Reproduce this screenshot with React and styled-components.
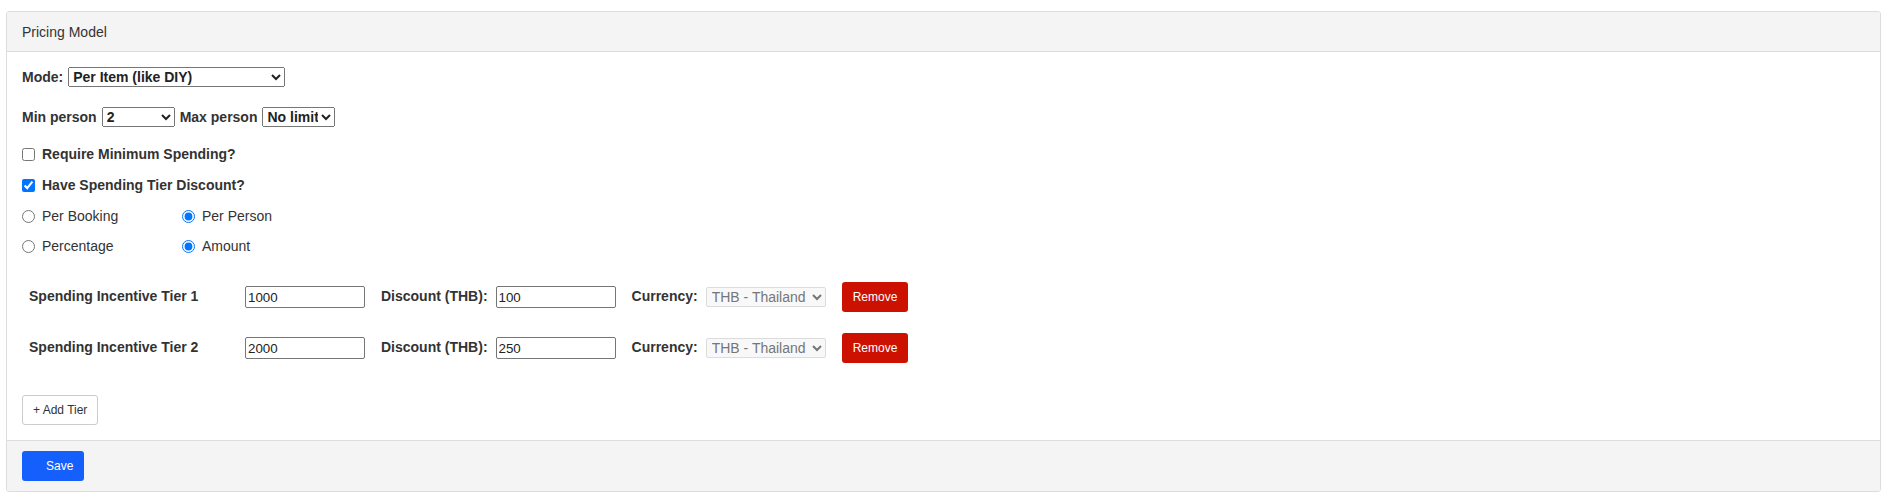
import React from 'react';
import styled, { createGlobalStyle } from 'styled-components';

const Global = createGlobalStyle`
  html, body { margin: 0; padding: 0; background: #fff; }
  body {
    font-family: "Liberation Sans", Arial, Helvetica, sans-serif;
    font-size: 14px;
    color: #333;
  }
  * { box-sizing: border-box; }
`;

const Page = styled.div`
  padding: 11px 8px 8px 6px;
`;

const Card = styled.section`
  border: 1px solid #ddd;
  border-radius: 3px;
  background: #fff;
  overflow: hidden;
`;

const CardHeader = styled.header`
  height: 40px;
  line-height: 40px;
  padding: 0 15px;
  background: #f4f4f4;
  border-bottom: 1px solid #ddd;
  font-size: 14px;
  color: #333;
`;

const CardBody = styled.div`
  padding: 15px;
  display: flex;
  flex-direction: column;
  align-items: flex-start;
`;

const CardFooter = styled.footer`
  padding: 10px 15px;
  background: #f4f4f4;
  border-top: 1px solid #ddd;
  display: flex;
`;

const Row = styled.div`
  display: flex;
  align-items: center;
  gap: 5px;
  height: 20px;
  margin-top: ${(p) => p.$mt || 0}px;
`;

const BoldLabel = styled.span`
  font-weight: bold;
  font-size: 14px;
  line-height: 16px;
  color: #333;
`;

const Select = styled.select`
  width: ${(p) => p.$w}px;
  height: 20px;
  font-family: "Liberation Sans", Arial, sans-serif;
  font-size: 14px;
  font-weight: bold;
  color: #222;
  margin: 0;
`;

const CurrencySelect = styled.select`
  width: 120px;
  height: 20px;
  margin: 0 16px 0 0;
  padding: 0 0 0 1px;
  font-family: "Liberation Sans", Arial, sans-serif;
  font-size: 14px;
  font-weight: normal;
  color: #767676;
  background-color: #f8f8f8;
  border: 1px solid #dcdcdc;
  border-radius: 2px;
  pointer-events: none;
`;

const CheckRow = styled.label`
  display: flex;
  align-items: center;
  height: 20px;
  margin-top: ${(p) => p.$mt || 0}px;
  font-weight: ${(p) => (p.$bold ? 'bold' : 'normal')};
  font-size: 14px;
  line-height: 16px;
  color: #333;
  cursor: pointer;

  input {
    width: 13px;
    height: 13px;
    margin: 0 7px 0 0;
  }
`;

const RadioGrid = styled.div`
  display: grid;
  grid-template-columns: 160px 160px;
  row-gap: 10px;
  margin-top: 11px;
`;

const TierRow = styled.div`
  display: flex;
  align-items: center;
  height: 30px;
  padding-left: 7px;
  margin-top: ${(p) => p.$mt || 0}px;
`;

const TierLabel = styled.span`
  width: 208px;
  margin: 0 8px 3px 0;
  font-weight: bold;
  font-size: 14px;
  line-height: 16px;
  color: #333;
`;

const FieldLabel = styled.span`
  margin: 0 8px 3px 0;
  font-weight: bold;
  font-size: 14px;
  line-height: 16px;
  color: #333;
`;

const TextInput = styled.input`
  width: 120px;
  height: 22px;
  margin: 0 16px 0 0;
  padding: 1px 2px;
  border: 1px solid #767676;
  border-radius: 2px;
  font-family: "Liberation Sans", Arial, sans-serif;
  font-size: 13.33px;
  color: #222;
  background: #fff;
`;

const Button = styled.button`
  height: 30px;
  border-radius: 3px;
  font-family: "Liberation Sans", Arial, sans-serif;
  font-size: 12px;
  line-height: 14px;
  cursor: pointer;
  margin: 0;
`;

const RemoveButton = styled(Button)`
  padding: 0 11px;
  border: none;
  background: #cc1100;
  color: #fff;
`;

const AddButton = styled(Button)`
  margin-top: 32px;
  padding: 0 10px;
  border: 1px solid #ccc;
  background: #fff;
  color: #333;
`;

const SaveButton = styled(Button)`
  padding: 0 11px 0 24px;
  border: none;
  background: #1560fc;
  color: #fff;
`;

const tiers = [
  { id: 1, amount: '1000', discount: '100', mt: 26 },
  { id: 2, amount: '2000', discount: '250', mt: 21 },
];

export default function App() {
  return (
    <>
      <Global />
      <Page>
        <Card>
          <CardHeader>Pricing Model</CardHeader>
          <CardBody>
            <Row>
              <BoldLabel>Mode:</BoldLabel>
              <Select $w={217} defaultValue="item">
                <option value="item">Per Item (like DIY)</option>
                <option value="booking">Per Booking</option>
              </Select>
            </Row>

            <Row $mt={20}>
              <BoldLabel>Min person</BoldLabel>
              <Select $w={73} defaultValue="2">
                <option value="1">1</option>
                <option value="2">2</option>
                <option value="3">3</option>
              </Select>
              <BoldLabel>Max person</BoldLabel>
              <Select $w={73} defaultValue="none">
                <option value="none">No limit</option>
                <option value="10">10</option>
              </Select>
            </Row>

            <CheckRow $bold $mt={17}>
              <input type="checkbox" />
              Require Minimum Spending?
            </CheckRow>
            <CheckRow $bold $mt={11}>
              <input type="checkbox" defaultChecked />
              Have Spending Tier Discount?
            </CheckRow>

            <RadioGrid>
              <CheckRow>
                <input type="radio" name="scope" />
                Per Booking
              </CheckRow>
              <CheckRow>
                <input type="radio" name="scope" defaultChecked />
                Per Person
              </CheckRow>
              <CheckRow>
                <input type="radio" name="kind" />
                Percentage
              </CheckRow>
              <CheckRow>
                <input type="radio" name="kind" defaultChecked />
                Amount
              </CheckRow>
            </RadioGrid>

            {tiers.map((t) => (
              <TierRow key={t.id} $mt={t.mt}>
                <TierLabel>Spending Incentive Tier {t.id}</TierLabel>
                <TextInput type="text" defaultValue={t.amount} />
                <FieldLabel>Discount (THB):</FieldLabel>
                <TextInput type="text" defaultValue={t.discount} />
                <FieldLabel>Currency:</FieldLabel>
                <CurrencySelect aria-disabled="true" tabIndex={-1} defaultValue="THB">
                  <option value="THB">THB - Thailand</option>
                </CurrencySelect>
                <RemoveButton type="button">Remove</RemoveButton>
              </TierRow>
            ))}

            <AddButton type="button">+ Add Tier</AddButton>
          </CardBody>
          <CardFooter>
            <SaveButton type="button">Save</SaveButton>
          </CardFooter>
        </Card>
      </Page>
    </>
  );
}
